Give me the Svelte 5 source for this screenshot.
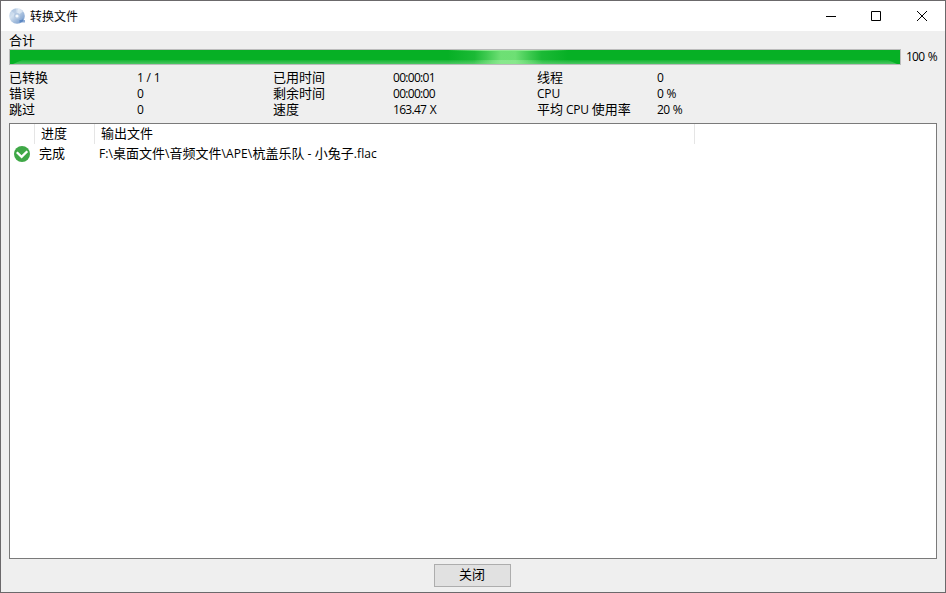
<script>
  const groups = [
    [['已转换', '1 / 1'], ['错误', '0'], ['跳过', '0']],
    [['已用时间', '00:00:01'], ['剩余时间', '00:00:00'], ['速度', '163.47 X']],
    [['线程', '0'], ['CPU', '0 %'], ['平均 CPU 使用率', '20 %']]
  ];
  const columns = ['', '进度', '输出文件'];
  const isLatin = (text) => !/[\u4e00-\u9fff]/.test(text);
  const split = (text) => text.split(/([\x20-\x7e]+)/).filter(Boolean);
</script>

{#snippet mixed(text)}
  {#each split(text) as part}<span class:latin={isLatin(part)}>{part}</span>{/each}
{/snippet}

<div class="window">
  <header>
    <svg class="disc" width="17" height="17" viewBox="0 0 17 17">
      <defs>
        <linearGradient id="disc" x1="0" y1="0" x2="1" y2="1">
          <stop offset="0" stop-color="#b3cbe5" />
          <stop offset=".35" stop-color="#d3e1f0" />
          <stop offset=".6" stop-color="#a5bedd" />
          <stop offset="1" stop-color="#6690c8" />
        </linearGradient>
      </defs>
      <circle cx="8" cy="8" r="7.8" fill="url(#disc)" />
      <path d="M8 8 2.5 2.7A7.5 7.5 0 0 1 7 .5Z" fill="#8eabd0" opacity=".35" />
      <path d="M8 8 9 .5a7.5 7.5 0 0 1 5 3Z" fill="#edf3fa" opacity=".6" />
      <circle cx="8" cy="8" r="3" fill="#b4c9e2" />
      <circle cx="8" cy="8" r="1.6" fill="#f5f9fd" />
      <path d="M10.500 12h2l1-1.500v1.500h2.500v2.500h-5.500z" fill="#3f72b8" opacity=".6" />
    </svg>
    <h1>转换文件</h1>
    <div class="controls">
      <svg width="46" height="29"><path d="M17 14.5h10" /></svg>
      <svg width="46" height="29"><path d="M16.5 9.5h9v9h-9z" /></svg>
      <svg width="46" height="29"><path d="m16 9 10 10M26 9 16 19" /></svg>
    </div>
  </header>

  <main>
    <div class="total">合计</div>
    <div class="progress">
      <div class="bar"><i class="shade"></i><i class="glow"></i></div>
      <span class="latin value">100 %</span>
    </div>
    <div class="stats">
      {#each groups as group}
        <dl>
          {#each group as [label, value]}
            <dt>{@render mixed(label)}</dt>
            <dd class="latin value">{value}</dd>
          {/each}
        </dl>
      {/each}
    </div>
    <div class="list">
      <div class="row head">
        {#each columns as column}<div>{column}</div>{/each}
      </div>
      <div class="row item">
        <div>
          <svg class="check" width="16" height="16" viewBox="0 0 16 16">
            <circle cx="8" cy="8" r="8" fill="#3fa847" />
            <path d="m2.800 6.200 4.800 4.700 5.700-5.700" fill="none" stroke="#fff" stroke-width="2.300" />
          </svg>
        </div>
        <div>完成</div>
        <div class="path">{@render mixed('F:\\桌面文件\\音频文件\\APE\\杭盖乐队 - 小兔子.flac')}</div>
      </div>
    </div>
    <footer><button>关闭</button></footer>
  </main>
</div>

<style>
  .window {
    box-sizing: border-box;
    width: 946px;
    height: 593px;
    border: 1px solid #6b696b;
    background: #efefef;
    color: #000;
    font: 13px/16px "Noto Sans CJK SC", sans-serif;
    display: flex;
    flex-direction: column;
    overflow: hidden;
  }
  .latin {
    font-family: "Open Sans", sans-serif;
    font-size: 12px;
    letter-spacing: -0.2px;
    white-space: pre;
  }
  .path .latin { letter-spacing: 0.1px; }
  .value {
    letter-spacing: -0.7px;
    word-spacing: 1px;
  }
  header {
    height: 30px;
    flex: none;
    display: flex;
    align-items: center;
    background: #fff;
  }
  .disc { margin-left: 8px; }
  h1 {
    margin: 0 0 0 4px;
    font-size: 12px;
    font-weight: 400;
  }
  .controls {
    display: flex;
    margin-left: auto;
    margin-right: -2px;
  }
  .controls path {
    fill: none;
    stroke: #000;
  }
  main {
    flex: 1;
    padding: 0 8px;
    display: flex;
    flex-direction: column;
  }
  .total {
    height: 17px;
    padding-top: 1px;
  }
  .progress {
    display: flex;
    gap: 5px;
    height: 16px;
  }
  .bar {
    box-sizing: border-box;
    position: relative;
    width: 892px;
    height: 16px;
    border: 1px solid #bcbcbc;
    background: #06b025;
    overflow: hidden;
  }
  .shade {
    position: absolute;
    inset: 10px 0 0;
    background: linear-gradient(#16b533, #4cc764);
    clip-path: polygon(3px 100%, 12px 0, 878px 0, 887px 100%);
  }
  .glow {
    position: absolute;
    left: 438px;
    top: 0;
    width: 120px;
    height: 14px;
    background:
      linear-gradient(90deg, transparent, #8ceb90 35%, #8ceb90 65%, transparent) top / 100% 1px no-repeat,
      linear-gradient(90deg, transparent, #75e37a30 22%, #75e37a80 32%, #75e37aee 44%, #75e37aee 56%, #75e37a80 68%, #75e37a30 78%, transparent);
  }
  .glow::after {
    content: "";
    position: absolute;
    inset: 10px 25px 0;
    background: linear-gradient(90deg, transparent, #a0efa280 40%, #a0efa280 60%, transparent);
  }
  .stats {
    display: flex;
    margin-top: 4px;
    height: 54px;
  }
  dl {
    width: 264px;
    margin: 0;
    display: grid;
    grid-template-columns: 128px 1fr;
    grid-auto-rows: 16px;
  }
  dl:nth-child(n + 2) { grid-template-columns: 120px 1fr; }
  dt, dd { margin: 0; }
  dd { padding-top: 1px; }
  .list {
    box-sizing: border-box;
    height: 436px;
    border: 1px solid #7a7a7a;
    background: #fff;
  }
  .row {
    display: grid;
    grid-template-columns: 25px 60px 600px;
  }
  .head {
    height: 20px;
    line-height: 18px;
  }
  .head > div {
    border-right: 1px solid #e5e5e5;
    padding-left: 6px;
  }
  .item {
    height: 19px;
    line-height: 18px;
  }
  .item > div { padding-left: 4px; }
  .check {
    display: block;
    margin-top: 2px;
  }
  footer {
    display: flex;
    justify-content: center;
    padding: 5px 2px 0 0;
  }
  button {
    box-sizing: border-box;
    width: 77px;
    height: 23px;
    padding: 0 0 3px;
    border: 1px solid #adadad;
    background: #e1e1e1;
    color: #000;
    font: inherit;
  }
</style>
